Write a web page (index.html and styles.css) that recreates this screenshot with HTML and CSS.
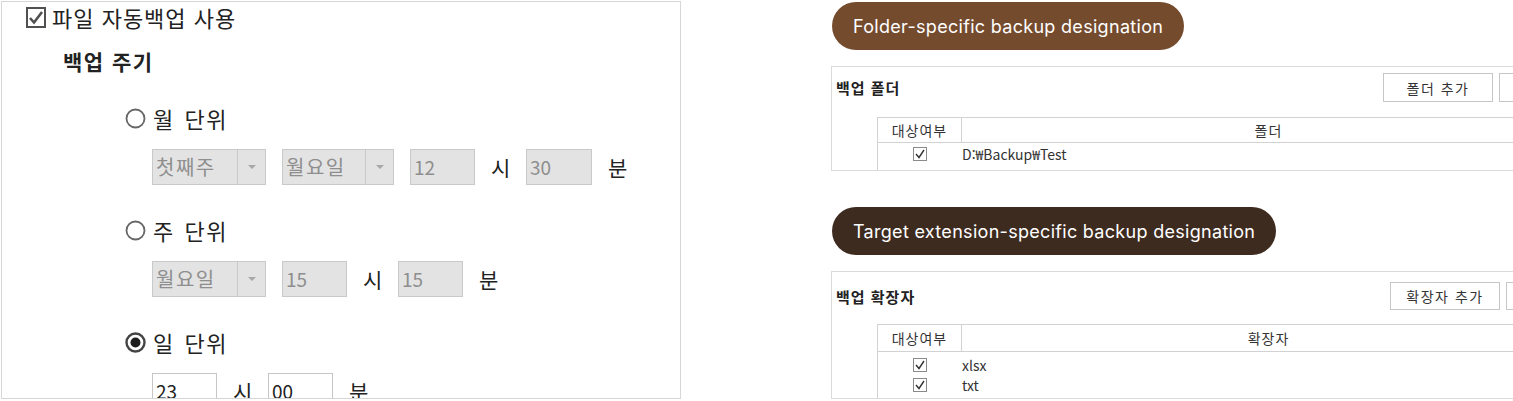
FILE: index.html
```html
<!DOCTYPE html>
<html lang="ko">

<head>
    <meta charset="utf-8">
    <title>파일 자동백업 설정</title>
    <link rel="stylesheet" href="styles.css">
</head>

<body>
    <div class="page">
        <section class="panel">
            <label class="use-row">
                <svg class="check-big" width="20" height="21" viewBox="0 0 20 21">
                    <rect x="1" y="1" width="18" height="19" fill="#fff" stroke="#505050" stroke-width="2" />
                    <polyline points="4,11 8,15.5 16,5" fill="none" stroke="#505050" stroke-width="2.6" />
                </svg>
                <span>파일 자동백업 사용</span>
            </label>

            <h2 class="section-title">백업 주기</h2>

            <div class="radio-row">
                <svg class="radio" width="21" height="21" viewBox="0 0 21 21">
                    <circle cx="10.5" cy="10.5" r="9" fill="#fff" stroke="#666" stroke-width="1.8" />
                </svg>
                <span>월 단위</span>
            </div>
            <div class="field-row">
                <div class="select sel-wide">
                    <span class="select-value">첫째주</span>
                    <span class="select-arrow"></span>
                </div>
                <div class="select sel-mid">
                    <span class="select-value">월요일</span>
                    <span class="select-arrow"></span>
                </div>
                <span class="num">12</span>
                <span class="unit">시</span>
                <span class="num num-wide">30</span>
                <span class="unit">분</span>
            </div>

            <div class="radio-row">
                <svg class="radio" width="21" height="21" viewBox="0 0 21 21">
                    <circle cx="10.5" cy="10.5" r="9" fill="#fff" stroke="#666" stroke-width="1.8" />
                </svg>
                <span>주 단위</span>
            </div>
            <div class="field-row">
                <div class="select sel-wide">
                    <span class="select-value">월요일</span>
                    <span class="select-arrow"></span>
                </div>
                <span class="num">15</span>
                <span class="unit">시</span>
                <span class="num">15</span>
                <span class="unit">분</span>
            </div>

            <div class="radio-row">
                <svg class="radio" width="21" height="21" viewBox="0 0 21 21">
                    <circle cx="10.5" cy="10.5" r="9" fill="#fff" stroke="#444" stroke-width="2.4" />
                    <circle cx="10.5" cy="10.5" r="5" fill="#1e1e1e" />
                </svg>
                <span>일 단위</span>
            </div>
            <div class="field-row">
                <span class="num is-on">23</span>
                <span class="unit">시</span>
                <span class="num is-on">00</span>
                <span class="unit">분</span>
            </div>
        </section>

        <section class="side">
            <div class="pill">Folder-specific backup designation</div>
            <div class="box">
                <div class="box-head">
                    <span class="box-title">백업 폴더</span>
                    <div class="btns">
                        <button class="btn">폴더 추가</button>
                        <button class="btn">폴더 삭제</button>
                    </div>
                </div>
                <div class="grid">
                    <div class="grid-head">
                        <div class="col-check">대상여부</div>
                        <div class="col-name">폴더</div>
                    </div>
                    <div class="grid-body">
                        <div class="grid-row">
                            <div class="col-check">
                                <svg width="14" height="14" viewBox="0 0 14 14">
                                    <rect x="0.5" y="0.5" width="13" height="13" fill="#fff" stroke="#8a8a8a" />
                                    <polyline points="3,7 6,10.5 11,3" fill="none" stroke="#333" stroke-width="1.4" />
                                </svg>
                            </div>
                            <div class="col-name">D:₩Backup₩Test</div>
                        </div>
                    </div>
                </div>
            </div>

            <div class="pill pill-ext">Target extension-specific backup designation</div>
            <div class="box box-ext">
                <div class="box-head">
                    <span class="box-title">백업 확장자</span>
                    <div class="btns">
                        <button class="btn">확장자 추가</button>
                        <button class="btn">확장자 삭제</button>
                    </div>
                </div>
                <div class="grid">
                    <div class="grid-head">
                        <div class="col-check">대상여부</div>
                        <div class="col-name">확장자</div>
                    </div>
                    <div class="grid-body">
                        <div class="grid-row">
                            <div class="col-check">
                                <svg width="14" height="14" viewBox="0 0 14 14">
                                    <rect x="0.5" y="0.5" width="13" height="13" fill="#fff" stroke="#8a8a8a" />
                                    <polyline points="3,7 6,10.5 11,3" fill="none" stroke="#333" stroke-width="1.4" />
                                </svg>
                            </div>
                            <div class="col-name">xlsx</div>
                        </div>
                        <div class="grid-row">
                            <div class="col-check">
                                <svg width="14" height="14" viewBox="0 0 14 14">
                                    <rect x="0.5" y="0.5" width="13" height="13" fill="#fff" stroke="#8a8a8a" />
                                    <polyline points="3,7 6,10.5 11,3" fill="none" stroke="#333" stroke-width="1.4" />
                                </svg>
                            </div>
                            <div class="col-name">txt</div>
                        </div>
                    </div>
                </div>
            </div>
        </section>
    </div>
</body>

</html>
```

FILE: styles.css
```css
* {
    box-sizing: border-box;
}

html,
body {
    margin: 0;
    padding: 0;
}

body {
    width: 1513px;
    height: 401px;
    overflow: hidden;
    background-color: #ffffff;
    color: #222222;
    font-family: "Noto Sans CJK KR", "Noto Sans", sans-serif;
}

.page {
    display: flex;
    align-items: flex-start;
    padding: 1px 0 0 1px;
}

/* left: schedule panel */
.panel {
    flex: none;
    width: 680px;
    height: 398px;
    border: 1px solid #d6d6d6;
    overflow: hidden;
    display: flex;
    flex-direction: column;
    align-items: flex-start;
}

.use-row {
    display: flex;
    align-items: center;
    gap: 6px;
    height: 22px;
    margin: 4px 0 0 24px;
    font-size: 22px;
    line-height: 22px;
    letter-spacing: 1px;
}

.section-title {
    margin: 21px 0 0 61px;
    height: 24px;
    font-size: 21px;
    line-height: 24px;
    font-weight: 700;
    letter-spacing: 1.5px;
}

.radio-row {
    display: flex;
    align-items: center;
    gap: 7px;
    height: 24px;
    margin: 33px 0 0 123px;
    font-size: 22px;
    line-height: 24px;
    letter-spacing: 1.5px;
    word-spacing: 2px;
}

.field-row {
    display: flex;
    align-items: center;
    gap: 16px;
    height: 36px;
    margin: 19px 0 0 150px;
}

.select {
    display: flex;
    height: 36px;
    border: 1px solid #c9c9c9;
    background-color: #e3e3e3;
}

.sel-wide {
    width: 114px;
}

.sel-mid {
    width: 112px;
}

.select-value {
    flex: 1;
    padding-left: 3px;
    font-size: 20px;
    line-height: 34px;
    letter-spacing: 1.5px;
    color: #8e8e8e;
}

.select-arrow {
    width: 28px;
    border-left: 1px solid #c9c9c9;
    display: flex;
    align-items: center;
    justify-content: center;
}

.select-arrow::after {
    content: "";
    border-left: 4px solid transparent;
    border-right: 4px solid transparent;
    border-top: 4px solid #a8a8a8;
}

.num {
    width: 65px;
    height: 36px;
    padding-left: 3px;
    border: 1px solid #c9c9c9;
    background-color: #e3e3e3;
    font-size: 19px;
    line-height: 34px;
    color: #8e8e8e;
}

.num-wide {
    width: 66px;
}

.num.is-on {
    background-color: #ffffff;
    border-color: #c6c6c6;
    color: #222222;
}

.unit {
    width: 19px;
    font-size: 21px;
    line-height: 36px;
    color: #222222;
}

/* right: folder / extension boxes */
.side {
    flex: none;
    width: 800px;
    margin-left: 150px;
    display: flex;
    flex-direction: column;
    align-items: flex-start;
}

.pill {
    height: 48px;
    margin: 1px 0 0 1px;
    padding: 0 21px;
    border-radius: 24px;
    background-color: #754b2e;
    color: #ffffff;
    display: flex;
    align-items: center;
    font-family: Inter, "Noto Sans", sans-serif;
    font-size: 18px;
    letter-spacing: 0.3px;
}

.pill-ext {
    margin-top: 36px;
    background-color: #3e2b20;
}

.box {
    width: 787px;
    margin-top: 16px;
    border: 1px solid #dadada;
}

.box-head {
    display: flex;
    align-items: center;
    padding: 6px 8px 0 4px;
}

.box-title {
    font-size: 15px;
    font-weight: 700;
    letter-spacing: 1px;
    color: #222222;
}

.btns {
    margin-left: auto;
    display: flex;
    gap: 6px;
}

.btn {
    width: 110px;
    height: 29px;
    padding: 0;
    border: 1px solid #c6c6c6;
    background-color: #ffffff;
    font-family: inherit;
    font-size: 14px;
    letter-spacing: 1.5px;
    color: #333333;
}

.grid {
    width: 698px;
    margin: 15px 0 0 45px;
    border-left: 1px solid #d2d2d2;
}

.grid-head {
    display: flex;
    height: 26px;
    border-top: 1px solid #d2d2d2;
    border-bottom: 1px solid #d2d2d2;
    font-size: 14px;
    letter-spacing: 1px;
    color: #333333;
}

.grid-head .col-check {
    border-right: 1px solid #d2d2d2;
}

.grid-head .col-name {
    justify-content: center;
}

.col-check {
    width: 84px;
    display: flex;
    align-items: center;
    justify-content: center;
}

.col-name {
    flex: 1;
    display: flex;
    align-items: center;
}

.grid-body {
    padding-bottom: 5px;
}

.grid-row {
    display: flex;
    height: 22px;
    font-size: 14px;
    color: #333333;
}

.box-ext {
    width: 794px;
}

.box-ext .box-head {
    padding-top: 10px;
}

.box-ext .btn {
    height: 28px;
}

.box-ext .grid {
    margin-top: 14px;
}

.box-ext .grid-head {
    height: 28px;
}

.box-ext .grid-body {
    padding: 3px 0;
}

.box-ext .grid-row {
    height: 20px;
}
```
